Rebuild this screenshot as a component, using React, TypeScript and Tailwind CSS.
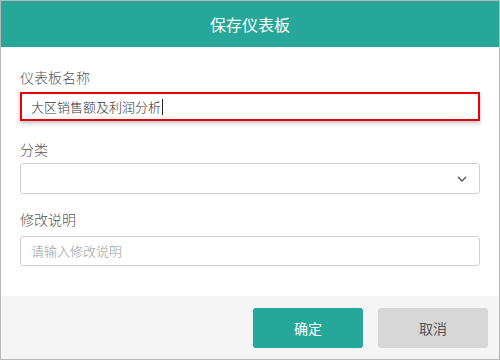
import React from "react";

function SaveDashboardDialog() {
  return (
    <div
      className="w-[500px] h-[360px] flex flex-col border border-[#b8b8b8] bg-white"
      style={{ fontFamily: '"Noto Sans CJK SC", "Noto Sans", sans-serif' }}
    >
      <div className="h-[46px] shrink-0 bg-[#27a69a] flex items-center justify-center text-white text-[16px]">
        保存仪表板
      </div>
      <div className="flex-1 flex flex-col px-[19px] pt-[20px] font-light">
        <label className="text-[14px] text-[#555] leading-[20px]">仪表板名称</label>
        <div className="mt-[5px] h-[29px] border-2 border-[#e8000b] shadow-[0_2px_4px_rgba(0,0,0,0.25)] flex items-center px-[9px] text-[13px] text-[#333]">
          大区销售额及利润分析
          <span className="inline-block w-px h-[16px] bg-[#222] ml-[1px]" />
        </div>
        <label className="mt-[18px] text-[14px] text-[#555] leading-[20px]">分类</label>
        <div className="mt-[4px] h-[31px] border border-[#cfcfcf] rounded-[3px] flex items-center justify-end pr-[12px]">
          <svg width="10" height="6" viewBox="0 0 10 6" fill="none">
            <path d="M1 1l4 4 4-4" stroke="#555" strokeWidth="1.4" />
          </svg>
        </div>
        <label className="mt-[15px] text-[14px] text-[#555] leading-[20px]">修改说明</label>
        <div className="mt-[7px] h-[30px] border border-[#cfcfcf] rounded-[3px] flex items-center px-[10px] text-[13px] text-[#999]">
          请输入修改说明
        </div>
      </div>
      <div className="h-[63px] shrink-0 bg-[#f5f5f5] flex items-start justify-end gap-[15px] pt-[12px] pr-[11px]">
        <button className="w-[110px] h-[40px] rounded-[3px] bg-[#27a69a] text-white text-[14px]">确定</button>
        <button className="w-[110px] h-[40px] rounded-[3px] bg-[#d7d7d7] text-[#555] text-[14px]">取消</button>
      </div>
    </div>
  );
}

export default function App() {
  return <SaveDashboardDialog />;
}
